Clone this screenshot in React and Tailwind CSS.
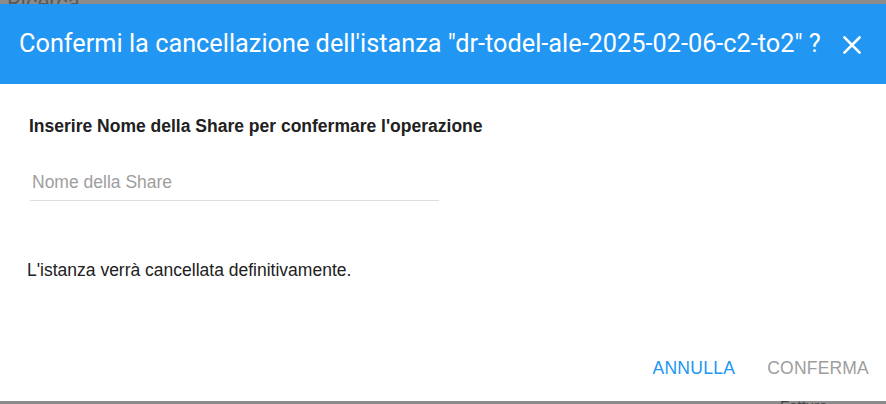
import React, { useState } from 'react';

const App = () => {
    const [name, setName] = useState('');

    return (
        <div className="relative w-[886px] h-[404px] overflow-hidden bg-[#8c8c8c] flex flex-col font-['Liberation_Sans',Arial,sans-serif]">
            {/* Backdrop page peeking above */}
            <div className="h-[4px] relative overflow-hidden shrink-0">
                <span className="absolute left-[7px] -top-[14px] text-[22px] text-[#5a5a5a] font-['Roboto',sans-serif]">Ricerca</span>
            </div>

            {/* Dialog */}
            <div className="flex flex-col bg-white h-[397px] shrink-0">
                {/* Header */}
                <div className="h-[80px] bg-[#2196f3] flex items-center justify-between pl-[19px] pr-[25px] shrink-0">
                    <h2 className="text-white text-[25.3px] leading-none font-['Roboto',sans-serif] whitespace-nowrap">
                        Confermi la cancellazione dell'istanza "dr-todel-ale-2025-02-06-c2-to2" ?
                    </h2>
                    <button className="w-[18px] h-[18px] text-white mt-[1px]">
                        <svg width="18" height="18" viewBox="0 0 18 18" fill="none" stroke="currentColor" strokeWidth="2.6" strokeLinecap="square">
                            <line x1="1.5" y1="1.5" x2="16.5" y2="16.5" />
                            <line x1="16.5" y1="1.5" x2="1.5" y2="16.5" />
                        </svg>
                    </button>
                </div>

                {/* Body */}
                <div className="flex flex-col px-[29px] pt-[32px] flex-1">
                    <p className="text-[17.5px] leading-[20px] font-bold text-[#212121]">
                        Inserire Nome della Share per confermare l'operazione
                    </p>
                    <input
                        value={name}
                        onChange={e => setName(e.target.value)}
                        placeholder="Nome della Share"
                        className="mt-[34px] w-[409px] ml-[1px] h-[31px] pb-[6px] pl-[2px] text-[17.5px] text-[#212121] placeholder:text-[#9e9e9e] border-b border-[#dedede] outline-none bg-transparent"
                    />
                    <p className="mt-[59px] -ml-[2px] text-[17.5px] leading-[20px] text-[#212121]">
                        L'istanza verrà cancellata definitivamente.
                    </p>
                </div>

                {/* Actions */}
                <div className="flex justify-end items-center gap-[32px] pr-[17px] pb-[23px]">
                    <button className="text-[17.5px] leading-[20px] tracking-[0.3px] text-[#2196f3] uppercase">Annulla</button>
                    <button className="text-[17.5px] leading-[20px] tracking-[0.2px] text-[#9e9e9e] uppercase" disabled>Conferma</button>
                </div>
            </div>

            {/* Backdrop page peeking below */}
            <div className="flex-1 relative overflow-hidden">
                <span className="absolute left-[780px] -top-[6px] text-[15px] text-[#444]">Fattura</span>
            </div>
        </div>
    );
};

export default App;
